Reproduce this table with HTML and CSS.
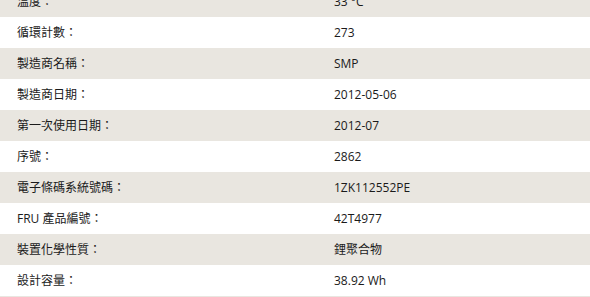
FILE: index.html
```html
<!DOCTYPE html>
<html lang="zh-Hant">
<head>
<meta charset="utf-8">
<link rel="stylesheet" href="styles.css">
</head>
<body>
<div class="props">
  <div class="row alt"><span class="label">溫度：</span><span class="value">33 °C</span></div>
  <div class="row"><span class="label">循環計數：</span><span class="value">273</span></div>
  <div class="row alt"><span class="label">製造商名稱：</span><span class="value">SMP</span></div>
  <div class="row"><span class="label">製造商日期：</span><span class="value">2012-05-06</span></div>
  <div class="row alt"><span class="label">第一次使用日期：</span><span class="value">2012-07</span></div>
  <div class="row"><span class="label">序號：</span><span class="value">2862</span></div>
  <div class="row alt"><span class="label">電子條碼系統號碼：</span><span class="value">1ZK112552PE</span></div>
  <div class="row"><span class="label">FRU 產品編號：</span><span class="value">42T4977</span></div>
  <div class="row alt"><span class="label">裝置化學性質：</span><span class="value">鋰聚合物</span></div>
  <div class="row"><span class="label">設計容量：</span><span class="value">38.92 Wh</span></div>
  <div class="row alt"></div>
</div>
</body>
</html>
```
FILE: styles.css
```css
html, body {
  margin: 0;
  padding: 0;
  background: #ffffff;
  overflow: hidden;
}
body {
  font-family: "Open Sans", "Noto Sans CJK TC", sans-serif;
  font-size: 12px;
  color: #1a1a1a;
}
.props {
  margin-top: -14px;
  display: flex;
  flex-direction: column;
}
.row {
  height: 31px;
  flex: none;
  display: grid;
  grid-template-columns: 317px 1fr;
  align-items: center;
  padding-left: 17px;
  box-sizing: border-box;
}
.row.alt {
  background: #e9e6e0;
}
.label, .value {
  white-space: nowrap;
  line-height: 16px;
}
```
